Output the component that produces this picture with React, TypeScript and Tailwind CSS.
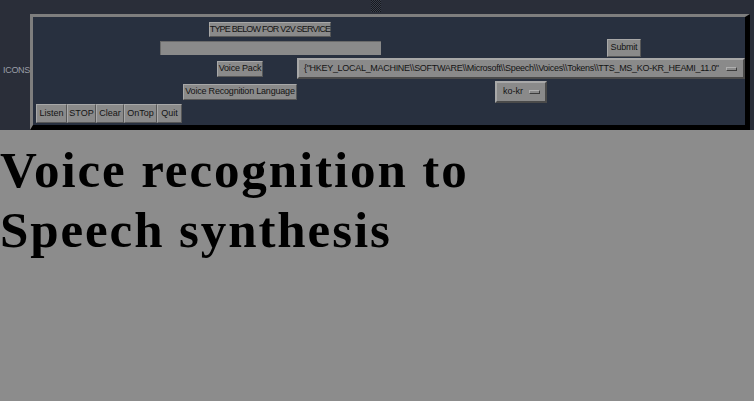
import type { ReactNode } from "react"

const ui = "font-['Liberation_Sans',Arial,sans-serif] text-[9px] text-[#141414] whitespace-nowrap"
const raised = "bg-[#8a8a8a] border border-t-[#a8a8a8] border-l-[#a8a8a8] border-b-[#575757] border-r-[#575757]"

function Label({ className = "", children }: { className?: string; children: ReactNode }) {
  return <div className={`${raised} ${ui} flex items-center justify-center ${className}`}>{children}</div>
}

function Indicator() {
  return <div className="w-[11px] h-[4px] border border-t-[#b0b0b0] border-l-[#b0b0b0] border-b-[#3c3c3c] border-r-[#3c3c3c] bg-[#8a8a8a]" />
}

function Grip() {
  return (
    <svg width="10" height="12" viewBox="0 0 10 12" className="block">
      <defs>
        <pattern id="chk" width="2" height="2" patternUnits="userSpaceOnUse">
          <rect width="2" height="2" fill="#3a3f4a" />
          <rect width="1" height="1" fill="#15181e" />
          <rect x="1" y="1" width="1" height="1" fill="#15181e" />
        </pattern>
      </defs>
      <rect width="10" height="12" fill="url(#chk)" />
    </svg>
  )
}

export default function App() {
  const voice = '{"HKEY_LOCAL_MACHINE\\\\SOFTWARE\\\\Microsoft\\\\Speech\\\\Voices\\\\Tokens\\\\TTS_MS_KO-KR_HEAMI_11.0"'

  return (
    <div className="min-h-screen bg-[#8c8c8c]">
      <div className="bg-[#2a2e39] h-[130px] flex flex-col">
        <div className="h-[14px] flex pl-[371px]">
          <Grip />
        </div>

        <div className="flex flex-1">
          <div className="w-[30px] flex items-center pl-[3px] pb-[2px]">
            <span className="font-['Liberation_Sans',Arial,sans-serif] text-[9px] tracking-[-0.3px] text-[#9a9ea8]">ICONS</span>
          </div>

          <div className="w-[720px] bg-[#28303f] border-t-[3px] border-l-[3px] border-t-[#7e7e7e] border-l-[#7e7e7e] border-b-[5px] border-r-[5px] border-b-black border-r-black flex flex-col">
            <div className="h-[21px] flex items-end pb-[1px] pl-[176px]">
              <Label className="w-[122px] h-[15px] tracking-[-0.8px]">TYPE BELOW FOR V2V SERVICE</Label>
            </div>

            <div className="h-[19px] flex items-center pl-[127px]">
              <div className="w-[221px] h-[14px] bg-[#8a8a8a] border-t border-l border-t-[#6a6a6a] border-l-[#6a6a6a]" />
              <Label className="ml-[226px] w-[34px] h-[18px] tracking-[-0.2px]">Submit</Label>
            </div>

            <div className="h-[23px] flex items-center pl-[184px]">
              <Label className="w-[46px] h-[16px] tracking-[-0.2px]">Voice Pack</Label>
              <div className="ml-[34px] w-[448px] h-[21px] bg-[#8a8a8a] border-2 border-t-[#a8a8a8] border-l-[#a8a8a8] border-b-[#4a4a4a] border-r-[#4a4a4a] flex items-center pl-[5px] pr-[6px]">
                <span className={`${ui} tracking-[-0.3px] flex-1`}>{voice}</span>
                <Indicator />
              </div>
            </div>

            <div className="h-[24px] flex items-center pl-[150px]">
              <Label className="w-[114px] h-[16px] tracking-[-0.2px]">Voice Recognition Language</Label>
              <div className="ml-[198px] w-[52px] h-[22px] bg-[#8a8a8a] border-2 border-t-[#a8a8a8] border-l-[#a8a8a8] border-b-[#4a4a4a] border-r-[#4a4a4a] flex items-center pl-[6px] pr-[5px]">
                <span className={`${ui} flex-1`}>ko-kr</span>
                <Indicator />
              </div>
            </div>

            <div className="h-[20px] flex items-start pl-[3px]">
              <Label className="w-[31px] h-[19px]">Listen</Label>
              <Label className="w-[29px] h-[19px]">STOP</Label>
              <Label className="w-[28px] h-[19px]">Clear</Label>
              <Label className="w-[33px] h-[19px]">OnTop</Label>
              <Label className="w-[25px] h-[19px]">Quit</Label>
            </div>
          </div>
        </div>
      </div>

      <h1 className="mt-[10px] font-['Liberation_Serif','Times_New_Roman',serif] font-bold text-[51px] leading-[60px] tracking-[1.9px] text-black">
        Voice recognition to
        <br />
        Speech synthesis
      </h1>
    </div>
  )
}
